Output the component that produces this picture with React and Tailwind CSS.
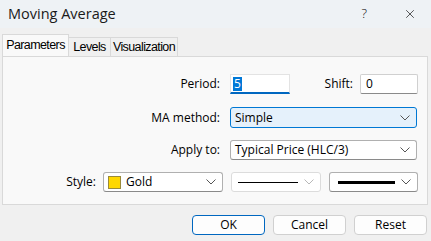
import { X } from "lucide-react";

function Chevron({ light }) {
  return (
    <svg width="10" height="6" viewBox="0 0 10 6" className="shrink-0">
      <path d="M0.5 0.5 L5 5 L9.5 0.5" fill="none" stroke={light ? "#b8b8b8" : "#555"} strokeWidth="1" />
    </svg>
  );
}

function Select({ className, children, light, active }) {
  return (
    <div
      className={`flex items-center justify-between rounded-[3px] border pl-[4px] pr-[6px] ${
        active
          ? "border-[#0078d4] bg-[#e5f1fb]"
          : light
          ? "border-[#dcdcdc] bg-white"
          : "border-[#b0b0b0] border-b-[#8a8a8a] bg-white"
      } ${className}`}
    >
      <div className="flex min-w-0 items-center">{children}</div>
      <Chevron light={light} />
    </div>
  );
}

export default function App() {
  return (
    <div
      className="flex h-[241px] w-[431px] flex-col bg-[#f0f0f0] text-[12px] text-black"
      style={{ fontFamily: '"Open Sans", "Noto Sans", sans-serif' }}
    >
      <div className="flex h-[28px] items-center bg-[#eef2f5] pl-[8px] pr-[14px]">
        <span className="text-[14.5px] text-[#1a1a1a]">Moving Average</span>
        <span className="ml-auto mr-[36px] text-[13px] font-light">?</span>
        <X size={14} strokeWidth={1.1} />
      </div>

      <div
        className="mt-[6px] flex items-end pl-[2px] text-[12.5px] tracking-[-0.6px]"
        style={{ fontFamily: '"Liberation Sans", Arial, sans-serif' }}
      >
        <div className="h-[22px] w-[67px] border border-b-0 border-[#d9d9d9] bg-[#f9f9f9] pt-[3px] text-center leading-[15px]">
          Parameters
        </div>
        <div className="h-[19px] w-[42px] border-r border-t border-[#d9d9d9] pt-[2px] text-center leading-[15px]">
          Levels
        </div>
        <div className="h-[19px] w-[67px] border-r border-t border-[#d9d9d9] pt-[2px] text-center leading-[15px]">
          Visualization
        </div>
      </div>

      <div className="mx-[2px] mr-[3px] flex h-[149px] flex-col border border-[#d9d9d9] bg-[#f9f9f9] pt-[17px]">
        <div className="flex h-[20px] items-center">
          <div className="w-[217px] text-right">Period:</div>
          <div className="ml-[10px] flex h-[20px] w-[60px] items-center border border-b-2 border-[#e3e3e3] border-b-[#0067c0] bg-white pl-[2px]">
            <span className="bg-[#0078d7] px-[1px] leading-[14px] text-white">5</span>
          </div>
          <div className="w-[63px] text-right">Shift:</div>
          <div className="ml-[7px] flex h-[20px] w-[58px] items-center rounded-[2px] border border-[#d0d0d0] border-b-[#8a8a8a] bg-white pl-[5px]">
            0
          </div>
        </div>

        <div className="mt-[13px] flex h-[21px] items-center">
          <div className="w-[217px] text-right">MA method:</div>
          <Select active className="ml-[10px] h-[21px] w-[187px]">
            Simple
          </Select>
        </div>

        <div className="mt-[12px] flex h-[20px] items-center">
          <div className="w-[217px] text-right">Apply to:</div>
          <Select className="ml-[10px] h-[20px] w-[187px]">Typical Price (HLC/3)</Select>
        </div>

        <div className="mt-[12px] flex h-[20px] items-center">
          <div className="w-[93px] text-right">Style:</div>
          <Select className="ml-[7px] h-[20px] w-[120px]">
            <span className="mr-[5px] h-[13px] w-[13px] border border-[#9a8a3a] bg-[#ffd700]" />
            Gold
          </Select>
          <Select light className="ml-[8px] h-[20px] w-[90px]">
            <span className="ml-[2px] h-px w-[60px] bg-black" />
          </Select>
          <Select className="ml-[8px] h-[20px] w-[89px]">
            <span className="ml-[4px] h-[3px] w-[57px] bg-black" />
          </Select>
        </div>
      </div>

      <div className="mt-[10px] flex justify-end gap-[8px] pr-[4px]">
        <button className="h-[20px] w-[73px] rounded-[4px] border border-[#0067c0] bg-[#fdfdfd]">OK</button>
        <button className="h-[20px] w-[73px] rounded-[4px] border border-[#d0d0d0] bg-[#fdfdfd]">Cancel</button>
        <button className="h-[20px] w-[73px] rounded-[4px] border border-[#d0d0d0] bg-[#fdfdfd]">Reset</button>
      </div>
    </div>
  );
}
